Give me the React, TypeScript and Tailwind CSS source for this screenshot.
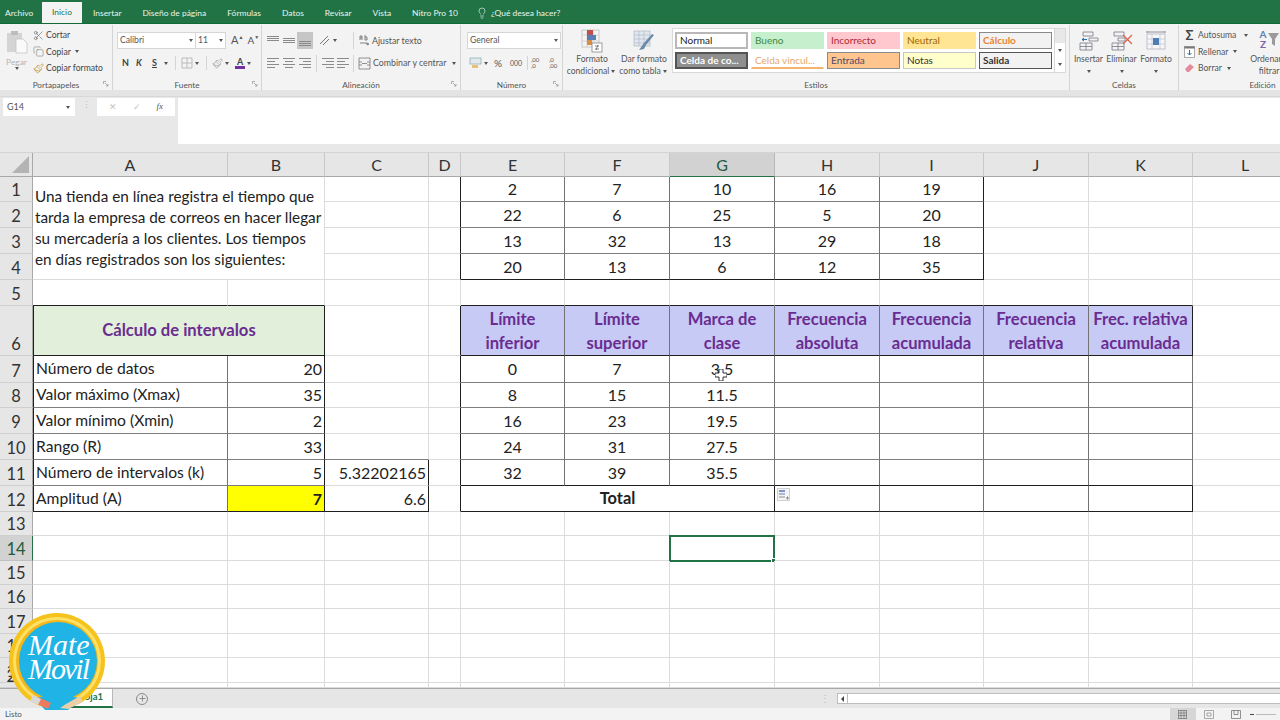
import { Copy, Paintbrush, Plus, Lightbulb, Scissors } from "lucide-react";

const cols = ["A", "B", "C", "D", "E", "F", "G", "H", "I", "J", "K", "L"];
const rowNumbers = Array.from({ length: 20 }, (_, i) => i + 1);

type Line = "grid" | "mid" | "dark";
type Spec = {
  text?: React.ReactNode;
  align?: string;
  font?: string;
  bg?: string;
  r?: Line;
  b?: Line;
  l?: boolean;
  span?: string;
  extra?: React.ReactNode;
};

const rightLine = { grid: "border-r-[#dcdcdc]", mid: "border-r-[#737373]", dark: "border-r-[#1f1f1f]" };
const bottomLine = { grid: "border-b-[#dcdcdc]", mid: "border-b-[#7d7d7d]", dark: "border-b-[#1f1f1f]" };
const purpleBold = "text-[16.6px] font-bold text-[#6a2c91]";

const topTable = [
  [2, 7, 10, 16, 19],
  [22, 6, 25, 5, 20],
  [13, 32, 13, 29, 18],
  [20, 13, 6, 12, 35],
];
const classes = [
  [0, 7, "3.5"],
  [8, 15, "11.5"],
  [16, 23, "19.5"],
  [24, 31, "27.5"],
  [32, 39, "35.5"],
];
const headers = [
  ["Límite", "inferior"],
  ["Límite", "superior"],
  ["Marca de", "clase"],
  ["Frecuencia", "absoluta"],
  ["Frecuencia", "acumulada"],
  ["Frecuencia", "relativa"],
  ["Frec. relativa", "acumulada"],
];
const calc: [string, string][] = [
  ["Número de datos", "20"],
  ["Valor máximo (Xmax)", "35"],
  ["Valor mínimo (Xmin)", "2"],
  ["Rango (R)", "33"],
  ["Número de intervalos (k)", "5"],
  ["Amplitud (A)", "7"],
];

const Cursor = () => (
  <svg className="absolute left-[45px] top-[13px]" width="12" height="12" viewBox="0 0 12 12">
    <path d="M4 0h4v4h4v4H8v4H4V8H0V4h4z" fill="#fff" stroke="#333" strokeWidth="1" />
  </svg>
);

const PasteOptions = () => (
  <div className="absolute left-[2px] top-[2px] flex h-[13px] w-[13px] items-center justify-center border border-[#d0d0d0] bg-[#f4f4f4]">
    <svg width="10" height="10" viewBox="0 0 10 10">
      <rect x="0" y="0" width="6" height="2" fill="#7f94c4" />
      <rect x="0" y="3" width="6" height="2" fill="#a9b8d8" />
      <rect x="0" y="6" width="6" height="2" fill="#c2c2c2" />
      <path d="M7 8h3M8.5 6.5v3" stroke="#888" strokeWidth="1" />
    </svg>
  </div>
);

const getCell = (col: string, row: number): Spec | null => {
  const c = cols.indexOf(col);
  if (row === 1 && col === "A") {
    return {
      span: "col-span-2 row-span-4",
      text: (
        <p className="self-start pl-[2px] pt-[9px] text-[15.3px] leading-[21px]">
          Una tienda en línea registra el tiempo que
          <br />
          tarda la empresa de correos en hacer llegar
          <br />
          su mercadería a los clientes. Los tiempos
          <br />
          en días registrados son los siguientes:
        </p>
      ),
      align: "justify-start",
    };
  }
  if (row <= 4 && c <= 1) return null;
  if (row === 6 && col === "A") {
    return { span: "col-span-2", text: "Cálculo de intervalos", font: purpleBold, bg: "bg-[#e2efda]", r: "dark", b: "dark", l: true };
  }
  if (row === 6 && col === "B") return null;
  if (row === 5 && c <= 1) return { b: "dark" };
  if (row >= 7 && row <= 12 && c <= 1) {
    const [label, value] = calc[row - 7];
    const b: Line = row === 12 ? "dark" : "mid";
    if (col === "A") return { text: label, font: "text-[15.65px] text-[#222]", align: "justify-start pl-[2px]", r: "mid", b, l: true };
    return {
      text: value,
      align: "justify-end pr-[2px]",
      r: "dark",
      b,
      font: row === 12 ? "text-[16px] font-bold text-[#222]" : undefined,
      bg: row === 12 ? "bg-[#ffff00]" : undefined,
    };
  }
  if (col === "C" && row === 11) return { text: "5.32202165", align: "justify-end pr-[2px]", r: "dark", b: "grid" };
  if (col === "C" && row === 12) return { text: "6.6", align: "justify-end pr-[2px]", r: "dark", b: "dark" };
  if (col === "C" && row === 10) return { b: "mid" };
  if (col === "D" && ((row >= 1 && row <= 4) || (row >= 6 && row <= 12))) return { r: "dark" };
  if (c >= 4 && c <= 8 && row <= 4) {
    return { text: topTable[row - 1][c - 4], r: col === "I" ? "dark" : "mid", b: row === 4 ? "dark" : "mid" };
  }
  if (c >= 4 && c <= 10 && row === 5) return { b: "dark" };
  if (c >= 4 && c <= 10 && row === 6) {
    const [a, b] = headers[c - 4];
    return {
      text: (
        <span className="text-center leading-[24px]">
          {a}
          <br />
          {b}
        </span>
      ),
      font: purpleBold,
      bg: "bg-[#c6caf5]",
      r: col === "K" ? "dark" : "mid",
      b: "dark",
    };
  }
  if (c >= 4 && c <= 10 && row >= 7 && row <= 11) {
    const text = c <= 6 ? classes[row - 7][c - 4] : undefined;
    return {
      text,
      r: "mid",
      b: row === 11 ? "dark" : "mid",
      extra: col === "G" && row === 7 ? <Cursor /> : undefined,
    };
  }
  if (row === 12 && col === "E") return { span: "col-span-3", text: "Total", font: "text-[16.4px] font-bold text-[#222]", r: "dark", b: "dark" };
  if (row === 12 && (col === "F" || col === "G")) return null;
  if (row === 12 && c >= 7 && c <= 10) {
    return { r: col === "K" ? "dark" : "mid", b: "dark", extra: col === "H" ? <PasteOptions /> : undefined };
  }
  if (row === 14 && col === "G") {
    return {
      extra: (
        <div className="absolute -left-px -top-px h-[27px] w-[106px] border-2 border-[#217346]">
          <div className="absolute -bottom-[3px] -right-[3px] h-[5px] w-[5px] border border-white bg-[#217346]" />
        </div>
      ),
    };
  }
  return {};
};

const Sheet = () => (
  <div className="grid h-[535px] grid-cols-[33px_195px_97px_104px_32px_104px_105px_105px_105px_104px_105px_104px_105px] grid-rows-[24px_25px_26px_26px_26px_26px_50px_27px_25px_26px_26px_26px_26px_24px_25px_24px_24px_25px_24px_25px_5px] overflow-hidden whitespace-nowrap bg-white">
    <div className="flex items-end justify-end border-b border-r border-[#a8a8a8] bg-[#e6e6e6] p-[3px]">
      <div className="h-0 w-0 border-b-[17px] border-l-[17px] border-b-[#b4b4b4] border-l-transparent" />
    </div>
    {cols.map((col) => (
      <div
        key={col}
        className={`flex items-center justify-center border-b border-r text-[16px] ${
          col === "G"
            ? "border-b-[#217346] border-r-[#b8b8b8] bg-[#d2d2d2] text-[#1e5c3a]"
            : "border-b-[#a8a8a8] border-r-[#c8c8c8] bg-[#e6e6e6] text-[#333]"
        }`}
      >
        {col}
      </div>
    ))}
    {rowNumbers.map((row) => (
      <div key={row} className="contents">
        <div
          className={`flex items-end justify-center border-b border-r text-[16.5px] leading-[22px] ${
            row === 14
              ? "border-b-[#c0c0c0] border-r-[#217346] bg-[#d2d2d2] text-[#1e5c3a]"
              : "border-b-[#cfcfcf] border-r-[#a8a8a8] bg-[#e6e6e6] text-[#333]"
          }`}
        >
          {row}
        </div>
        {cols.map((col) => {
          const s = getCell(col, row);
          if (!s) return null;
          return (
            <div
              key={col}
              className={`relative flex items-center border-b border-r ${s.font ?? "text-[16px] text-[#222]"} ${s.span ?? ""} ${s.align ?? "justify-center"} ${rightLine[s.r ?? "grid"]} ${bottomLine[s.b ?? "grid"]} ${s.l ? "border-l border-l-[#1f1f1f]" : ""} ${s.bg ?? ""}`}
            >
              {s.text}
              {s.extra}
            </div>
          );
        })}
      </div>
    ))}
  </div>
);

const tabs = ["Insertar", "Diseño de página", "Fórmulas", "Datos", "Revisar", "Vista", "Nitro Pro 10"];

const TitleBar = () => (
  <div className="flex h-6 items-end gap-[21px] border-b border-b-[#0f6b35] bg-[#217346] pl-[5px] text-[8.45px] text-[#e8f3ec]">
    <div className="-mr-[13px] flex h-[20px] w-[29px] items-center">Archivo</div>
    <div className="-mr-[10px] flex h-[21px] w-[40px] items-center justify-center bg-[#f3f3f3] text-[#217346]">Inicio</div>
    {tabs.map((t) => (
      <div key={t} className="flex h-[20px] items-center">
        {t}
      </div>
    ))}
    <div className="-ml-[3px] flex h-[20px] items-center gap-[3px]">
      <Lightbulb size={12} strokeWidth={1.3} />
      <span>¿Qué desea hacer?</span>
    </div>
  </div>
);

const Caret = () => <span className="mx-[2px] inline-block h-0 w-0 border-x-[2px] border-t-[3px] border-x-transparent border-t-[#555] align-middle" />;

const Launcher = () => (
  <svg className="absolute bottom-[3px] right-[3px]" width="6" height="6" viewBox="0 0 6 6">
    <path d="M0.5 3V0.5H3M2 2l3 3M5 3v2H3" stroke="#999" strokeWidth="0.8" fill="none" />
  </svg>
);

const Group = ({ width, label, children, launcher }: { width: string; label: string; children: React.ReactNode; launcher?: boolean }) => (
  <div className={`relative flex h-[65px] flex-col border-r border-r-[#d4d4d4] ${width}`}>
    <div className="flex min-h-0 flex-1">{children}</div>
    <div className="text-center text-[8.2px] leading-[10px] text-[#555]">{label}</div>
    {launcher && <Launcher />}
  </div>
);

const AlignLines = ({ kind }: { kind: "left" | "center" | "right" }) => {
  const long = 12;
  const short = 8;
  const x = kind === "left" ? 1 : kind === "center" ? 3 : 5;
  return (
    <svg width="14" height="12" viewBox="0 0 14 12">
      <rect x="1" y="1" width={long} height="1" fill="#8a8a8a" />
      <rect x={x} y="4" width={short} height="1" fill="#8a8a8a" />
      <rect x="1" y="7" width={long} height="1" fill="#8a8a8a" />
      <rect x={x} y="10" width={short} height="1" fill="#8a8a8a" />
    </svg>
  );
};

const VAlign = ({ y }: { y: number }) => (
  <svg width="14" height="12" viewBox="0 0 14 12">
    <rect x="1" y={y} width="12" height="1" fill="#8a8a8a" />
    <rect x="1" y={y + 2} width="12" height="1" fill="#8a8a8a" />
    <rect x="1" y={y + 4} width="12" height="1" fill="#8a8a8a" />
  </svg>
);

const PasteIcon = () => (
  <svg width="22" height="24" viewBox="0 0 22 24">
    <rect x="1" y="3" width="15" height="19" fill="#d4d4d4" />
    <rect x="5" y="1" width="7" height="4" fill="#bdbdbd" />
    <path d="M10 9h7l4 4v10H10z" fill="#fafafa" stroke="#c4c4c4" strokeWidth="0.8" />
  </svg>
);

const Clipboards = () => (
  <Group width="w-[113px]" label="Portapapeles" launcher>
    <div className="flex w-[33px] flex-col items-center pt-[5px] text-[#b4b4b4]">
      <PasteIcon />
      <span className="mt-[3px] text-[8.4px] leading-[10px]">Pegar</span>
      <Caret />
    </div>
    <div className="flex flex-col gap-[4px] pt-[4px] text-[8.6px] leading-[12.5px] text-[#444]">
      <div className="flex items-center gap-[2px]">
        <Scissors size={11} strokeWidth={1.2} className="text-[#555]" />
        Cortar
      </div>
      <div className="flex items-center gap-[2px]">
        <Copy size={11} strokeWidth={1.2} className="text-[#7a7a7a]" />
        Copiar
        <Caret />
      </div>
      <div className="flex items-center gap-[2px]">
        <Paintbrush size={11} strokeWidth={1.4} className="text-[#b8892e]" />
        Copiar formato
      </div>
    </div>
  </Group>
);

const Font = () => (
  <Group width="w-[149px]" label="Fuente" launcher>
    <div className="flex flex-col gap-[5px] pl-[4px] pt-[7px] text-[8.6px] text-[#555]">
      <div className="flex h-[17px] items-center">
        <div className="flex h-[17px] w-[79px] items-center justify-between border border-[#d6d6d6] bg-white pl-[2px]">
          Calibri
          <Caret />
        </div>
        <div className="flex h-[17px] w-[30px] items-center justify-between border border-l-0 border-[#d6d6d6] bg-white pl-[2px]">
          11
          <Caret />
        </div>
        <span className="ml-[5px] text-[11px]">A</span>
        <span className="-mt-[6px] text-[5px]">▲</span>
        <span className="ml-[4px] text-[10px]">A</span>
        <span className="-mt-[6px] text-[5px]">▼</span>
      </div>
      <div className="flex h-[18px] items-center pl-[5px] text-[9px] text-[#444]">
        <b className="w-[14px]">N</b>
        <b className="w-[16px] italic">K</b>
        <b className="w-[10px] underline">S</b>
        <Caret />
        <div className="mx-[5px] h-[14px] w-px bg-[#d4d4d4]" />
        <svg width="12" height="12" viewBox="0 0 12 12">
          <path d="M1 1h10v10H1zM6 1v10M1 6h10" stroke="#bbb" fill="none" />
        </svg>
        <Caret />
        <div className="mx-[5px] h-[14px] w-px bg-[#d4d4d4]" />
        <Paintbrush size={11} strokeWidth={1.2} className="text-[#888]" />
        <Caret />
        <span className="ml-[4px] flex flex-col items-center border-b-[3px] border-b-[#7030a0] px-[2px] font-bold leading-[9px]">A</span>
        <Caret />
      </div>
    </div>
  </Group>
);

const Alignment = () => (
  <Group width="w-[199px]" label="Alineación" launcher>
    <div className="flex flex-col gap-[5px] pl-[3px] pt-[7px] text-[8.6px] text-[#555]">
      <div className="flex h-[17px] items-center">
        <div className="flex w-[16px] justify-center"><VAlign y={1} /></div>
        <div className="flex w-[16px] justify-center"><VAlign y={3} /></div>
        <div className="flex h-[17px] w-[16px] items-center justify-center bg-[#c6c6c6]"><VAlign y={6} /></div>
        <svg className="ml-[5px]" width="13" height="13" viewBox="0 0 13 13">
          <path d="M2 10 10 2M5 11l6-6" stroke="#777" fill="none" />
        </svg>
        <Caret />
        <div className="ml-[14px] mr-[5px] h-[17px] w-px bg-[#d4d4d4]" />
        <svg width="11" height="13" viewBox="0 0 11 13">
          <path d="M1 6V2h2v4M1 4h2M6 1v5h2V3H6M1 9h7v2l2-1-2-1" stroke="#666" strokeWidth="0.8" fill="none" />
        </svg>
        <span className="ml-[2px] text-[8.8px]">Ajustar texto</span>
      </div>
      <div className="flex h-[18px] items-center">
        <div className="flex w-[16px] justify-center"><AlignLines kind="left" /></div>
        <div className="flex w-[16px] justify-center"><AlignLines kind="center" /></div>
        <div className="flex w-[16px] justify-center"><AlignLines kind="right" /></div>
        <div className="mx-[3px] h-[17px] w-px bg-[#d4d4d4]" />
        <div className="flex w-[15px] justify-center"><AlignLines kind="right" /></div>
        <div className="flex w-[15px] justify-center"><AlignLines kind="left" /></div>
        <div className="ml-[3px] mr-[4px] h-[17px] w-px bg-[#d4d4d4]" />
        <svg width="13" height="13" viewBox="0 0 13 13">
          <path d="M1 1h11v11H1zM1 5h3M9 5h3M1 8h3M9 8h3M4 6.5h5" stroke="#777" strokeWidth="0.8" fill="none" />
        </svg>
        <span className="ml-[2px] whitespace-nowrap text-[8.8px]">Combinar y centrar</span>
        <span className="ml-[4px]"><Caret /></span>
      </div>
    </div>
  </Group>
);

const NumberGroup = () => (
  <Group width="w-[102px]" label="Número" launcher>
    <div className="flex flex-col gap-[5px] pl-[6px] pt-[7px] text-[8.6px] text-[#555]">
      <div className="flex h-[17px] w-[94px] items-center justify-between border border-[#d6d6d6] bg-white pl-[2px]">
        General
        <Caret />
      </div>
      <div className="flex h-[18px] items-center pl-[2px]">
        <svg width="13" height="12" viewBox="0 0 13 12">
          <rect x="1" y="1" width="11" height="6" fill="#e2e8ee" stroke="#8aa" strokeWidth="0.7" />
          <rect x="3" y="8" width="6" height="3" fill="#e8c070" />
        </svg>
        <Caret />
        <span className="ml-[4px] w-[16px] text-[10px]">%</span>
        <span className="w-[17px] text-[7px]">000</span>
        <div className="mr-[3px] h-[14px] w-px bg-[#d4d4d4]" />
        <span className="w-[18px] text-[6px] leading-[6px]">,00<br />,0</span>
        <span className="text-[6px] leading-[6px]">,0<br />,00</span>
      </div>
    </div>
  </Group>
);

const BigButton = ({ icon, lines, width }: { icon: React.ReactNode; lines: React.ReactNode[]; width: string }) => (
  <div className={`flex flex-col items-center pt-[4px] text-center text-[8.6px] leading-[11.5px] text-[#555] ${width}`}>
    <div className="flex h-[24px] items-center">{icon}</div>
    <div className="mt-px">{lines[0]}</div>
    <div className="whitespace-nowrap">{lines[1]}</div>
  </div>
);

const styleBase = "flex h-[17px] w-[73px] items-center border pl-[3px] text-[10px]";

const Styles = () => (
  <Group width="w-[507px]" label="Estilos">
    <div className="flex">
      <div className="flex w-[109px] pl-[2px]">
        <BigButton
          width="w-[54px]"
          lines={["Formato", <>condicional<Caret /></>]}
          icon={
            <svg width="22" height="24" viewBox="0 0 22 24">
              <rect x="1" y="1" width="17" height="17" fill="#f4f4f4" stroke="#b8b8b8" strokeWidth="0.7" />
              <path d="M1 6h17M1 12h17M6 1v17M12 1v17" stroke="#c8c8c8" strokeWidth="0.7" />
              <rect x="6" y="1" width="6" height="5" fill="#c05050" />
              <rect x="6" y="6" width="9" height="5" fill="#5a7fb5" />
              <rect x="6" y="11" width="5" height="5" fill="#d89040" />
              <rect x="11" y="14" width="10" height="9" fill="#fff" stroke="#888" strokeWidth="0.8" />
              <path d="M14 17h4M14 20h4M17 16l-2 5" stroke="#555" strokeWidth="0.7" />
            </svg>
          }
        />
        <BigButton
          width="w-[50px]"
          lines={["Dar formato", <>como tabla<Caret /></>]}
          icon={
            <svg width="22" height="22" viewBox="0 0 22 22">
              <rect x="1" y="1" width="16" height="15" fill="#dfe7f0" stroke="#b0b8c0" strokeWidth="0.7" />
              <path d="M1 5h16M1 9h16M1 13h16M6 1v15M11 1v15" stroke="#aab" strokeWidth="0.5" />
              <path d="M21 5 13 15l-2 4-5 1 5-7 8-9z" fill="#6a8aa8" />
            </svg>
          }
        />
      </div>
      <div className="mt-[3px] flex h-[45px] w-[383px] self-start border border-[#d8d8d8] bg-white px-[2px] pt-[3px]">
        <div className="grid grid-cols-[repeat(5,73px)] grid-rows-[17px_17px] gap-x-[3px] gap-y-[3px]">
          <div className={`${styleBase} border-2 border-[#b8b8b8] bg-white text-[#222]`}>Normal</div>
          <div className={`${styleBase} border-[#c6efce] bg-[#c6efce] text-[#3b8a3e]`}>Bueno</div>
          <div className={`${styleBase} border-[#ffc7ce] bg-[#ffc7ce] text-[#b02a37]`}>Incorrecto</div>
          <div className={`${styleBase} border-[#ffe594] bg-[#ffe594] text-[#9c6500]`}>Neutral</div>
          <div className={`${styleBase} border-[#8a8a8a] bg-[#f2f2f2] font-bold text-[#e8852c]`}>Cálculo</div>
          <div className={`${styleBase} border-2 border-[#555] bg-[#8f8f8f] font-bold text-white`}>Celda de co...</div>
          <div className={`${styleBase} border-transparent border-b-2 border-b-[#f2b36c] bg-white text-[#e8a868]`}>Celda vincul...</div>
          <div className={`${styleBase} border-[#8a8a8a] bg-[#ffc58f] text-[#4a4a6a]`}>Entrada</div>
          <div className={`${styleBase} border-[#c8c8c8] bg-[#ffffcc] text-[#333]`}>Notas</div>
          <div className={`${styleBase} border-[#555] bg-[#f2f2f2] font-bold text-[#333]`}>Salida</div>
        </div>
      </div>
      <div className="mt-[3px] flex h-[45px] w-[11px] flex-col self-start border border-l-0 border-[#d8d8d8] text-[#666]">
        <div className="flex-1 bg-[#e8e8e8]" />
        <div className="flex flex-1 items-center justify-center bg-white"><Caret /></div>
        <div className="flex flex-1 items-center justify-center bg-white"><Caret /></div>
      </div>
    </div>
  </Group>
);

const CellsGroup = () => (
  <Group width="w-[109px]" label="Celdas">
    <div className="flex pl-[2px]">
      <BigButton
        width="w-[33px]"
        lines={["Insertar", <Caret />]}
        icon={
          <svg width="20" height="20" viewBox="0 0 20 20">
            <path d="M4 1h10v4H4zM1 12h12v7H1zM7 12v7M1 15.5h12M10 7h9v3h-9z" stroke="#778" strokeWidth="0.8" fill="none" />
            <path d="M8 8.5H3M5 7l-2 1.5L5 10" stroke="#2a6ea8" fill="none" />
          </svg>
        }
      />
      <BigButton
        width="w-[33px]"
        lines={["Eliminar", <Caret />]}
        icon={
          <svg width="22" height="20" viewBox="0 0 22 20">
            <path d="M3 1h10v4H3zM1 12h12v7H1zM7 12v7M1 15.5h12M7 7h7v3H7z" stroke="#778" strokeWidth="0.8" fill="none" />
            <path d="M12 4l9 9M21 4l-9 9" stroke="#d9614a" strokeWidth="1.2" />
          </svg>
        }
      />
      <BigButton
        width="w-[36px]"
        lines={["Formato", <Caret />]}
        icon={
          <svg width="20" height="22" viewBox="0 0 20 22">
            <path d="M1 2h18M1 1v2M19 1v2" stroke="#778" strokeWidth="0.8" />
            <rect x="1" y="4" width="18" height="15" fill="#f6f6f6" stroke="#aab" strokeWidth="0.7" />
            <path d="M6 4v15M14 4v15M1 9h18M1 14h18" stroke="#bbc" strokeWidth="0.6" />
            <rect x="7" y="8" width="6" height="7" fill="#4a7eb5" />
          </svg>
        }
      />
    </div>
  </Group>
);

const Editing = () => (
  <div className="relative flex h-[65px] w-[101px] flex-col">
    <div className="flex flex-1 text-[8.6px] text-[#555]">
      <div className="flex w-[74px] flex-col gap-[4px] pl-[5px] pt-[4px] leading-[12.5px]">
        <div className="flex items-center gap-[3px]">
          <span className="w-[11px] text-center text-[13px] leading-[12px] font-bold text-[#444]">Σ</span>
          Autosuma
          <span className="ml-[3px]"><Caret /></span>
        </div>
        <div className="flex items-center gap-[3px]">
          <svg width="11" height="12" viewBox="0 0 11 12">
            <rect x="0.5" y="0.5" width="10" height="11" fill="#fff" stroke="#888" strokeWidth="0.7" />
            <rect x="0.5" y="0.5" width="10" height="2" fill="#777" />
            <path d="M5.5 4v5M3.5 7l2 2 2-2" stroke="#2a6ea8" fill="none" />
          </svg>
          Rellenar
          <Caret />
        </div>
        <div className="flex items-center gap-[3px]">
          <svg width="11" height="10" viewBox="0 0 11 10">
            <path d="M1 6 6 1l4 3-5 5H3z" fill="#e58a9c" />
          </svg>
          Borrar
          <Caret />
        </div>
      </div>
      <div className="flex flex-col items-center pt-[4px] text-center leading-[11.5px]">
        <div className="flex h-[24px] text-[10px] font-bold leading-[10px] text-[#5b7fb5]">
          <span>A<br /><span className="text-[#8060a8]">Z</span></span>
          <svg className="ml-px mt-[4px]" width="11" height="14" viewBox="0 0 11 14">
            <path d="M0 0h11L7 6v7L4 11V6z" fill="#9a9a9a" />
          </svg>
        </div>
        <div className="mt-px whitespace-nowrap">Ordenar y</div>
        <div>filtrar</div>
      </div>
    </div>
    <div className="pl-[66px] text-center text-[8.2px] leading-[10px] text-[#555]">Edición</div>
  </div>
);

const FormulaBar = () => (
  <div className="flex h-[63px] flex-col border-b border-b-[#d4d4d4] bg-[#e8e8e8]">
    <div className="h-[7px] border-b border-b-[#d8d8d8] bg-[#e4e4e4]" />
    <div className="flex flex-1 items-start pb-[8px] pt-[1px] text-[9px] text-[#555]">
      <div className="ml-[3px] flex h-[18px] w-[72px] items-center justify-between bg-white pl-[4px] pr-[3px]">
        G14
        <Caret />
      </div>
      <span className="w-[22px] text-center text-[#bbb]">⋮</span>
      <div className="flex h-[18px] w-[78px] items-center justify-around bg-white px-[4px] text-[#c4c4c4]">
        <span>✕</span>
        <span>✓</span>
        <span className="font-['Liberation_Serif'] italic text-[#555]">fx</span>
      </div>
      <div className="ml-[3px] h-[46px] flex-1 bg-white" />
    </div>
  </div>
);

const Logo = () => (
  <div className="absolute left-[8px] top-[612px] h-[98px] w-[98px]">
    <svg className="absolute inset-0" width="98" height="98" viewBox="0 0 98 98">
      <circle cx="49" cy="49" r="48" fill="#f6c21c" />
      <circle cx="49" cy="49" r="44" fill="#ffe066" />
      <circle cx="49" cy="49" r="41" fill="#f3b71a" />
      <path d="M37 98 60 98 70 88 72 86 49 82 27 86z" fill="#20b4e6" />
      <circle cx="50" cy="49" r="39" fill="#20b4e6" />
      <path d="M30 85 43 91 40 97 27 91z" fill="#ee7a5c" />
      <path d="M25 83 33 87 30 93 22 89z" fill="#d9d9d9" />
      <path d="M72 84 58 92 52 96 60 97 75 90z" fill="#e8cfa8" />
    </svg>
    <div className="absolute left-[20px] top-[19px] font-['Liberation_Serif'] text-[30px] leading-[28px] text-white italic">
      Mate
    </div>
    <div className="absolute left-[20px] top-[43px] font-['Liberation_Serif'] text-[30px] leading-[28px] tracking-[-2px] text-white italic">
      Movil
    </div>
  </div>
);

const SheetTabs = () => (
  <div className="flex h-[20px] items-stretch border-t border-t-[#a8a8a8] bg-[#e6e6e6]">
    <div className="ml-[50px] flex w-[63px] items-center justify-end border-x border-b-2 border-x-[#b8b8b8] border-b-[#217346] bg-white pr-[9px] text-[9.5px] font-bold text-[#217346]">
      Hoja1
    </div>
    <div className="ml-[23px] flex items-center">
      <div className="flex h-[12px] w-[12px] items-center justify-center rounded-full border border-[#8a8a8a]">
        <Plus size={9} strokeWidth={2} className="text-[#777]" />
      </div>
    </div>
    <span className="ml-[672px] self-center text-[10px] text-[#bbb]">⋮</span>
    <div className="ml-[7px] mt-[4px] flex h-[11px] flex-1 border border-r-0 border-[#bdbdbd] bg-white">
      <div className="flex w-[10px] items-center justify-center border-r border-[#bdbdbd]">
        <div className="h-0 w-0 border-y-[3px] border-r-[3px] border-y-transparent border-r-[#444]" />
      </div>
    </div>
  </div>
);

const StatusBar = () => (
  <div className="flex h-[12px] items-center bg-[#f3f3f3] text-[8px] text-[#555]">
    <span className="pl-[5px]">Listo</span>
    <div className="ml-[1148px] flex h-[12px] items-center">
      <div className="flex h-[12px] w-[26px] items-center justify-center bg-[#d6d6d6]">
        <svg width="9" height="9" viewBox="0 0 9 9"><path d="M0 .5h9M0 3h9M0 5.5h9M0 8.5h9M.5 0v9M3 0v9M6 0v9M8.5 0v9" stroke="#666" strokeWidth="0.6" /></svg>
      </div>
      <div className="flex w-[27px] justify-center">
        <svg width="10" height="9" viewBox="0 0 10 9"><path d="M.5.5h9v8h-9zM3 3h4v3H3z" stroke="#888" strokeWidth="0.7" fill="none" /></svg>
      </div>
      <div className="flex w-[27px] justify-center">
        <svg width="10" height="9" viewBox="0 0 10 9"><path d="M.5.5h9v8h-9zM3 .5v4h4v-4" stroke="#666" strokeWidth="0.7" fill="none" /></svg>
      </div>
      <div className="h-px w-[4px] bg-[#444]" />
      <div className="ml-[2px] h-px w-[20px] bg-[#bbb]" />
    </div>
  </div>
);

const App = () => {
  return (
    <div className="relative flex h-[720px] w-[1280px] flex-col overflow-hidden bg-white font-['Lato','Open_Sans',sans-serif]">
      <TitleBar />
      <div className="flex h-[66px] bg-[#f3f3f3] pt-px">
        <Clipboards />
        <Font />
        <Alignment />
        <NumberGroup />
        <Styles />
        <CellsGroup />
        <Editing />
      </div>
      <FormulaBar />
      <Sheet />
      <SheetTabs />
      <StatusBar />
      <Logo />
    </div>
  );
};

export default App;
